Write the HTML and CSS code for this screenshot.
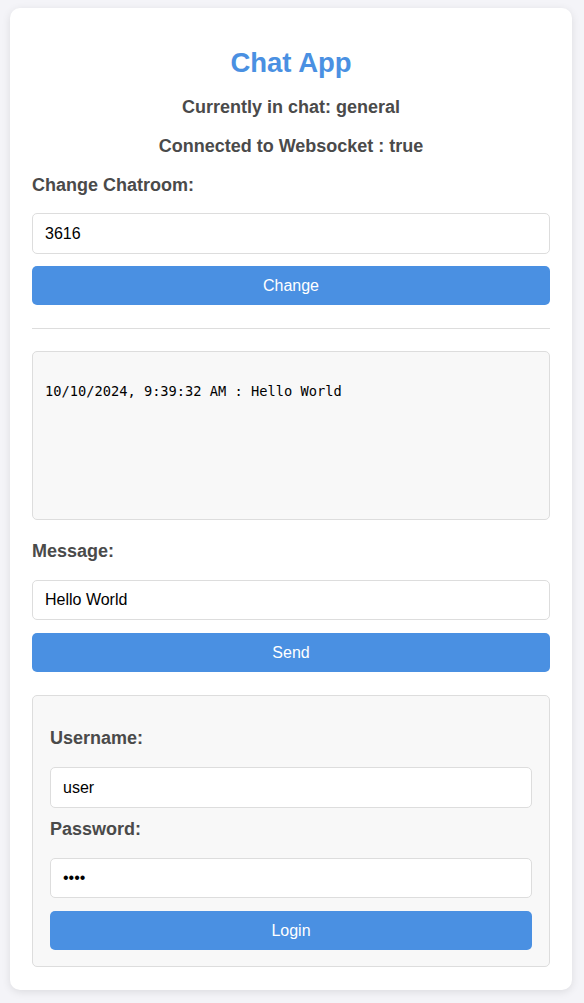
FILE: index.html
```html
<!DOCTYPE html>
<html lang="en">
<head>
<meta charset="utf-8">
<title>Chat App</title>
<link rel="stylesheet" href="styles.css">
</head>
<body>
<div class="card">
  <h1 class="title">Chat App</h1>
  <h3 class="status status-first">Currently in chat: general</h3>
  <h3 class="status status-second">Connected to Websocket : true</h3>
  <label class="label label-room">Change Chatroom:</label>
  <input class="input input-room" type="text" value="3616">
  <button class="btn">Change</button>
  <hr class="divider">
  <div class="chat-box">
    <p class="chat-line">10/10/2024, 9:39:32 AM : Hello World</p>
  </div>
  <label class="label label-msg">Message:</label>
  <input class="input input-msg" type="text" value="Hello World">
  <button class="btn btn-send">Send</button>
  <div class="login-box">
    <label class="label label-user">Username:</label>
    <input class="input input-user" type="text" value="user">
    <label class="label label-pass">Password:</label>
    <input class="input input-pass" type="password" value="pass">
    <button class="btn btn-login">Login</button>
  </div>
</div>
</body>
</html>
```
FILE: styles.css
```css
html, body {
  margin: 0;
  padding: 0;
}
body {
  background: #f4f4f8;
  font-family: "Liberation Sans", Arial, sans-serif;
  color: #4a4a4a;
  padding: 8px 12px 13px 10px;
}
.card {
  background: #ffffff;
  border-radius: 10px;
  box-shadow: 0 2px 8px rgba(0, 0, 0, 0.1);
  padding: 20px 22px 23px 22px;
  display: flex;
  flex-direction: column;
}
.title {
  margin: 19px 0 0 0;
  font-size: 27.5px;
  line-height: 32px;
  font-weight: bold;
  color: #4a90e2;
  text-align: center;
}
.status {
  margin: 18px 0 0 0;
  font-size: 18px;
  line-height: 22px;
  font-weight: bold;
  text-align: center;
  color: #4a4a4a;
}
.status-first {
  margin-top: 17px;
}
.status-second {
  margin-top: 17px;
}
.label {
  display: block;
  font-size: 18px;
  line-height: 22px;
  font-weight: bold;
  color: #4a4a4a;
}
.label-room { margin-top: 17px; }
.label-msg { margin-top: 20px; }
.label-user { margin-top: 0; }
.label-pass { margin-top: 10px; }
.input {
  box-sizing: border-box;
  display: block;
  width: 100%;
  height: 41px;
  margin: 17px 0 0 0;
  padding: 0 12px;
  border: 1px solid #dddddd;
  border-radius: 5px;
  background: #ffffff;
  font-family: "Liberation Sans", Arial, sans-serif;
  font-size: 16px;
  color: #000000;
  outline: none;
}
.input-msg { margin-top: 18px; height: 40px; }
.input-user { margin-top: 18px; }
.input-pass { margin-top: 18px; height: 40px; }
.btn {
  display: block;
  width: 100%;
  height: 39px;
  margin: 12px 0 0 0;
  border: none;
  border-radius: 5px;
  background: #4a90e2;
  color: #ffffff;
  font-family: "Liberation Sans", Arial, sans-serif;
  font-size: 16px;
  cursor: pointer;
}
.btn-send { margin-top: 13px; }
.btn-login { margin-top: 13px; }
.divider {
  margin: 23px 0 0 0;
  border: none;
  border-top: 1px solid #dddddd;
  height: 0;
}
.chat-box {
  box-sizing: border-box;
  margin-top: 22px;
  height: 169px;
  background: #f8f8f8;
  border: 1px solid #dddddd;
  border-radius: 5px;
  padding: 30px 12px 10px 12px;
}
.chat-line {
  margin: 0;
  font-family: "DejaVu Sans Mono", "Liberation Mono", monospace;
  font-size: 13.7px;
  line-height: 18px;
  color: #000000;
}
.login-box {
  margin-top: 23px;
  box-sizing: border-box;
  background: #f8f8f8;
  border: 1px solid #dddddd;
  border-radius: 5px;
  padding: 31px 17px 16px 17px;
}
```
